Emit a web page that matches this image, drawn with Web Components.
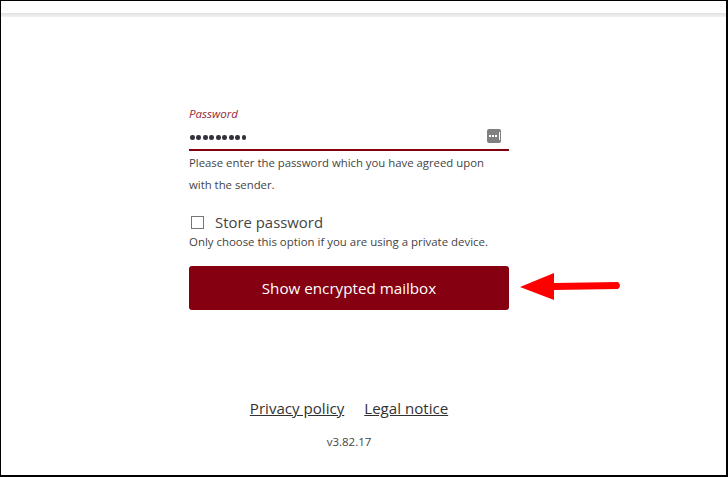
<!DOCTYPE html>
<html>
<head>
<meta charset="utf-8">
<title>Password</title>
<style>
    html, body { margin: 0; padding: 0; background: white; }
    body { font-family: "Open Sans", "Noto Sans", sans-serif; }
</style>
</head>
<body>

<template id="password-field">
    <style>
        :host { display: block; color: rgb(68, 68, 68); }
        .label { font-size: 11.5px; font-style: italic; line-height: 16px; color: rgb(150, 40, 55); }
        .row {
            display: flex;
            align-items: center;
            justify-content: space-between;
            height: 27px;
            border-bottom: 2px solid rgb(133, 0, 17);
        }
        .dots { display: flex; gap: 1.9px; padding: 4px 0 0 1px; }
        .dots i { width: 4.6px; height: 4.6px; border-radius: 50%; background: rgb(50, 50, 60); }
        svg { display: block; margin-right: 8px; }
        .hint { font-size: 11.35px; line-height: 22px; margin-top: 1px; }
    </style>
    <div class="label"><slot name="label"></slot></div>
    <div class="row">
        <div class="dots"><i></i><i></i><i></i><i></i><i></i><i></i><i></i><i></i><i></i></div>
        <svg width="14" height="14" viewBox="0 0 14 14">
            <rect width="14" height="14" rx="2" fill="rgb(128,128,128)"/>
            <rect x="2" y="6" width="2" height="2" fill="white"/>
            <rect x="5" y="6" width="2" height="2" fill="white"/>
            <rect x="8" y="6" width="2" height="2" fill="white"/>
            <rect x="12" y="3" width="1" height="8" fill="white"/>
        </svg>
    </div>
    <div class="hint"><slot></slot></div>
</template>

<template id="store-check">
    <style>
        :host { display: block; color: rgb(68, 68, 68); }
        .row { display: flex; align-items: center; gap: 11px; padding-left: 2px; height: 22px; }
        .box { width: 11px; height: 11px; border: 1px solid rgb(118, 118, 118); background: white; }
        .text { font-size: 14.9px; }
        .hint { font-size: 11.43px; line-height: 15px; margin-top: 1px; }
    </style>
    <div class="row"><div class="box"></div><div class="text"><slot name="label"></slot></div></div>
    <div class="hint"><slot></slot></div>
</template>

<template id="submit-button">
    <style>
        :host {
            display: flex;
            align-items: center;
            justify-content: center;
            height: 44px;
            border-radius: 3px;
            background: rgb(133, 0, 17);
            color: white;
            font-size: 15.2px;
            font-weight: 500;
        }
    </style>
    <slot></slot>
</template>

<template id="page-footer">
    <style>
        :host { display: block; text-align: center; color: rgb(68, 68, 68); }
        .links { display: flex; justify-content: center; gap: 20px; font-size: 15.1px; line-height: 20px; }
        ::slotted(a) { color: rgb(50, 50, 50); text-decoration: underline; }
        .version { font-size: 11.5px; line-height: 16px; margin-top: 16px; }
    </style>
    <div class="links"><slot name="links"></slot></div>
    <div class="version"><slot></slot></div>
</template>

<template id="login-page">
    <style>
        :host {
            display: block;
            position: relative;
            box-sizing: border-box;
            width: 728px;
            height: 477px;
            border: 1px solid black;
            border-width: 1px 2px 2px 1px;
            overflow: hidden;
            background: white;
        }
        .band { height: 4px; margin-top: 12px; background: linear-gradient(rgb(225, 225, 225), rgb(242, 242, 242)); }
        .form { width: 320px; margin: 89px 0 0 188px; }
        ::slotted(store-check) { margin-top: 15px; }
        ::slotted(submit-button) { margin-top: 17px; }
        ::slotted(page-footer) { margin-top: 88px; }
        .arrow { position: absolute; left: 519px; top: 271px; }
    </style>
    <div class="band"></div>
    <div class="form"><slot></slot></div>
    <svg class="arrow" width="102" height="32" viewBox="0 0 102 32">
        <path d="M0 15 L34 1 L34 11 L98 10 Q102 13.5 98 17 L34 18 L34 28 Z" fill="rgb(255,0,0)"/>
    </svg>
</template>

<login-page>
    <password-field>
        <span slot="label">Password</span>
        Please enter the password which you have agreed upon with the sender.
    </password-field>
    <store-check>
        <span slot="label">Store password</span>
        Only choose this option if you are using a private device.
    </store-check>
    <submit-button>Show encrypted mailbox</submit-button>
    <page-footer>
        <a slot="links" href="#">Privacy policy</a>
        <a slot="links" href="#">Legal notice</a>
        v3.82.17
    </page-footer>
</login-page>

<script>
    class ShadowTemplate extends HTMLElement {
        constructor() {
            super();
            let shadowRoot = this.attachShadow({ mode: 'open' });
            shadowRoot.appendChild(document.getElementById(this.localName).content.cloneNode(true));
        }
    }

    ["password-field", "store-check", "submit-button", "page-footer", "login-page"].forEach(name => {
        customElements.define(name, class extends ShadowTemplate {});
    });
</script>
</body>
</html>
